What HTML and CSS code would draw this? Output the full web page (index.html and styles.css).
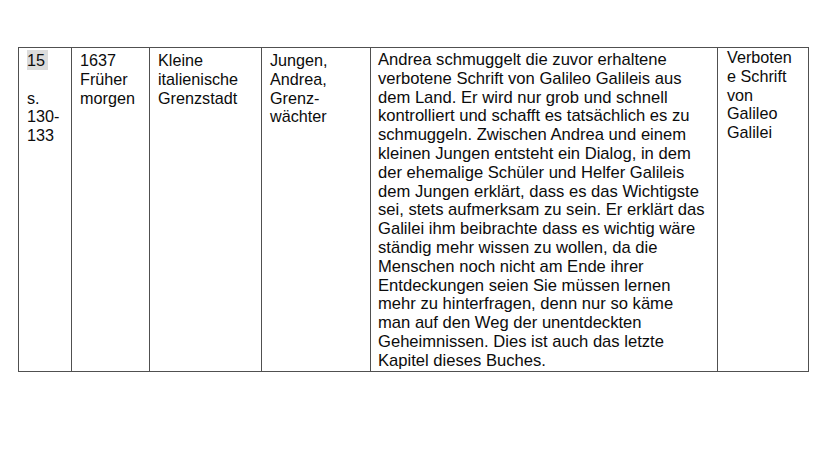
FILE: index.html
```html
<!DOCTYPE html>
<html lang="de">
<head>
<meta charset="utf-8">
<title>Tabelle</title>
<link rel="stylesheet" href="styles.css">
</head>
<body>
<table class="plan">
  <colgroup>
    <col class="c1"><col class="c2"><col class="c3"><col class="c4"><col class="c5"><col class="c6">
  </colgroup>
  <tr>
    <td><span class="mark">15</span><br><br>s.<br>130-<br>133</td>
    <td>1637<br>Früher<br>morgen</td>
    <td>Kleine<br>italienische<br>Grenzstadt</td>
    <td>Jungen,<br>Andrea,<br>Grenz-<br>wächter</td>
    <td class="long">Andrea schmuggelt die zuvor erhaltene<br>verbotene Schrift von Galileo Galileis aus<br>dem Land. Er wird nur grob und schnell<br>kontrolliert und schafft es tatsächlich es zu<br>schmuggeln. Zwischen Andrea und einem<br>kleinen Jungen entsteht ein Dialog, in dem<br>der ehemalige Schüler und Helfer Galileis<br>dem Jungen erklärt, dass es das Wichtigste<br>sei, stets aufmerksam zu sein. Er erklärt das<br>Galilei ihm beibrachte dass es wichtig wäre<br>ständig mehr wissen zu wollen, da die<br>Menschen noch nicht am Ende ihrer<br>Entdeckungen seien Sie müssen lernen<br>mehr zu hinterfragen, denn nur so käme<br>man auf den Weg der unentdeckten<br>Geheimnissen. Dies ist auch das letzte<br>Kapitel dieses Buches.</td>
    <td class="last">Verboten<br>e Schrift<br>von<br>Galileo<br>Galilei</td>
  </tr>
</table>
</body>
</html>
```

FILE: styles.css
```css
html, body {
  margin: 0;
  padding: 0;
  background: #ffffff;
}
body {
  padding: 47px 0 0 18px;
  font-family: "Liberation Sans", Arial, sans-serif;
  color: #0c0c0c;
}
.plan {
  border-collapse: collapse;
  table-layout: fixed;
  width: 790px;
  height: 323px;
}
.c1 { width: 53px; }
.c2 { width: 78px; }
.c3 { width: 112px; }
.c4 { width: 109px; }
.c5 { width: 347px; }
.c6 { width: 91px; }
.plan td {
  border: 1.5px solid #505050;
  vertical-align: top;
  padding: 3px 2px 0 8px;
  font-size: 16.2px;
  line-height: 18.8px;
  white-space: nowrap;
  overflow: hidden;
}
.plan td.long {
  padding-left: 7px;
  font-size: 16.6px;
}
.plan td.last {
  padding-left: 9px;
  padding-top: 0;
}
.mark {
  background: #dcdcdc;
  padding: 1px 3px 1px 0;
}
```
